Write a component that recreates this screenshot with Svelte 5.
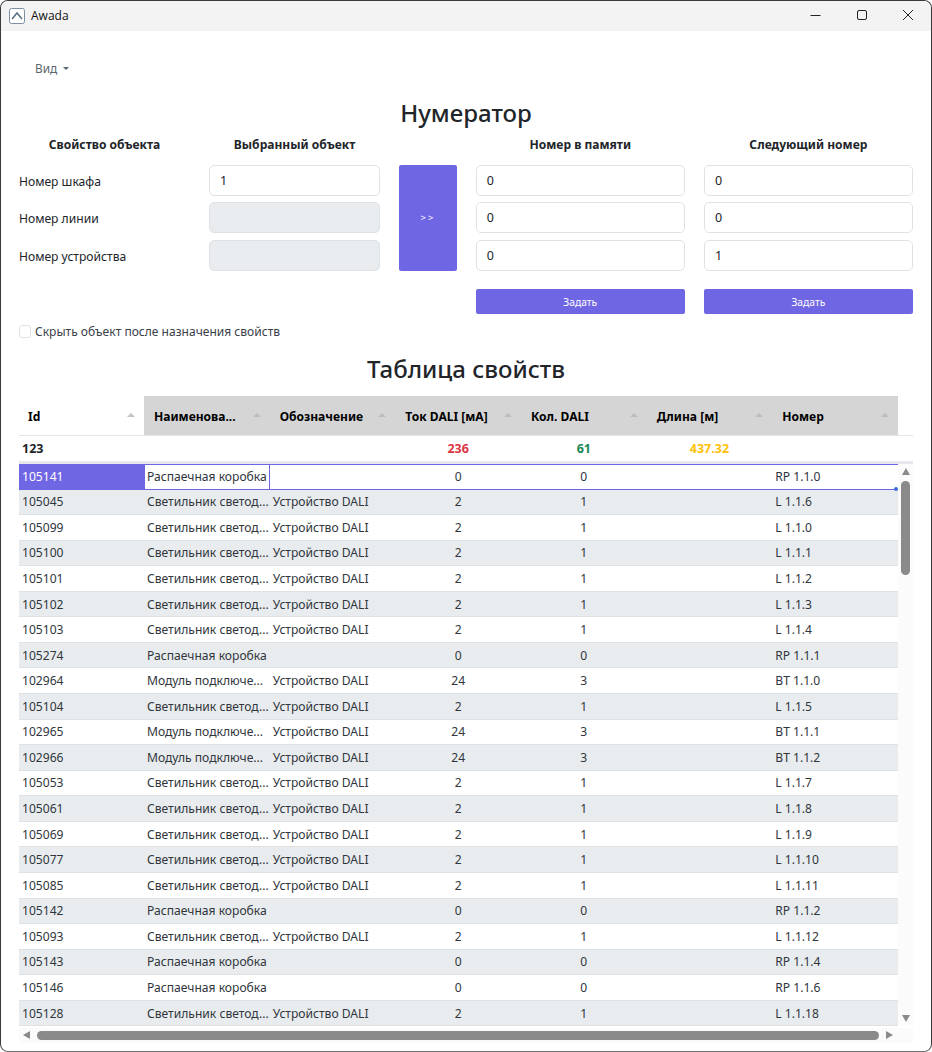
<script>
  const LAMP = 'Светильник светод...';
  const MOD = 'Модуль подключе...';
  const BOX = 'Распаечная коробка';
  const DALI = 'Устройство DALI';
  const rows = [
    ['105141', BOX, '', 0, 0, 'RP 1.1.0'],
    ['105045', LAMP, DALI, 2, 1, 'L 1.1.6'],
    ['105099', LAMP, DALI, 2, 1, 'L 1.1.0'],
    ['105100', LAMP, DALI, 2, 1, 'L 1.1.1'],
    ['105101', LAMP, DALI, 2, 1, 'L 1.1.2'],
    ['105102', LAMP, DALI, 2, 1, 'L 1.1.3'],
    ['105103', LAMP, DALI, 2, 1, 'L 1.1.4'],
    ['105274', BOX, '', 0, 0, 'RP 1.1.1'],
    ['102964', MOD, DALI, 24, 3, 'BT 1.1.0'],
    ['105104', LAMP, DALI, 2, 1, 'L 1.1.5'],
    ['102965', MOD, DALI, 24, 3, 'BT 1.1.1'],
    ['102966', MOD, DALI, 24, 3, 'BT 1.1.2'],
    ['105053', LAMP, DALI, 2, 1, 'L 1.1.7'],
    ['105061', LAMP, DALI, 2, 1, 'L 1.1.8'],
    ['105069', LAMP, DALI, 2, 1, 'L 1.1.9'],
    ['105077', LAMP, DALI, 2, 1, 'L 1.1.10'],
    ['105085', LAMP, DALI, 2, 1, 'L 1.1.11'],
    ['105142', BOX, '', 0, 0, 'RP 1.1.2'],
    ['105093', LAMP, DALI, 2, 1, 'L 1.1.12'],
    ['105143', BOX, '', 0, 0, 'RP 1.1.4'],
    ['105146', BOX, '', 0, 0, 'RP 1.1.6'],
    ['105128', LAMP, DALI, 2, 1, 'L 1.1.18']
  ];
  const heads = ['Id', 'Наименова...', 'Обозначение', 'Ток DALI [мА]', 'Кол. DALI', 'Длина [м]', 'Номер'];
</script>

<div class="window">
  <header class="titlebar">
    <svg class="logo" width="16" height="16" viewBox="0 0 16 16">
      <rect x="0.5" y="0.5" width="15" height="15" rx="2" fill="#fff" stroke="#7d8ea3" />
      <path d="M3 11 L8 5 L13 11" fill="none" stroke="#5e7187" stroke-width="1.6" />
    </svg>
    <span class="app-name">Awada</span>
    <div class="controls">
      <svg width="46" height="30" viewBox="0 0 46 30"><path d="M17.5 14.5h10" stroke="#222" stroke-width="1" /></svg>
      <svg width="46" height="30" viewBox="0 0 46 30"><rect x="18.5" y="9.5" width="9" height="9" rx="1.5" fill="none" stroke="#222" /></svg>
      <svg width="46" height="30" viewBox="0 0 46 30"><path d="M18 9l10 10M28 9L18 19" stroke="#222" stroke-width="1" /></svg>
    </div>
  </header>

  <main class="content">
    <div class="menu">Вид <span class="caret"></span></div>
    <h1>Нумератор</h1>

    <section class="numerator">
      <div class="col-head">Свойство объекта</div>
      <div class="col-head">Выбранный объект</div>
      <div></div>
      <div class="col-head">Номер в памяти</div>
      <div class="col-head">Следующий номер</div>

      <div class="label">Номер шкафа</div>
      <div class="field">1</div>
      <div class="transfer">&gt;&gt;</div>
      <div class="field">0</div>
      <div class="field">0</div>

      <div class="label">Номер линии</div>
      <div class="field disabled"></div>
      <div class="field">0</div>
      <div class="field">0</div>

      <div class="label">Номер устройства</div>
      <div class="field disabled"></div>
      <div class="field">0</div>
      <div class="field">1</div>

      <div class="set first">Задать</div>
      <div class="set">Задать</div>
    </section>

    <label class="check"><span class="box"></span>Скрыть объект после назначения свойств</label>

    <h1 class="second">Таблица свойств</h1>

    <section class="table">
      <div class="thead">
        {#each heads as h, i}
          <div class="th" class:plain={i === 0}>
            <span class="th-text">{h}</span>
            <span class="sort"></span>
          </div>
        {/each}
      </div>
      <div class="summary">
        <div class="s-id">123</div>
        <div></div>
        <div></div>
        <div class="num red">236</div>
        <div class="num green">61</div>
        <div class="num amber">437.32</div>
        <div></div>
      </div>
      <div class="body">
        <div class="rows">
          {#each rows as r, i}
            <div class="row" class:alt={i % 2 === 1} class:selected={i === 0}>
              <div class="td id">{r[0]}</div>
              <div class="td name">{r[1]}</div>
              <div class="td">{r[2]}</div>
              <div class="td num">{r[3]}</div>
              <div class="td num">{r[4]}</div>
              <div class="td"></div>
              <div class="td">{r[5]}</div>
            </div>
          {/each}
        </div>
        <div class="vscroll">
          <span class="arrow up"></span>
          <span class="vthumb"></span>
          <span class="arrow down"></span>
        </div>
      </div>
      <div class="hscroll">
        <span class="arrow left"></span>
        <span class="hthumb"></span>
        <span class="arrow right"></span>
      </div>
    </section>
  </main>
</div>

<style>
  :global(body) {
    margin: 0;
    background: #fff;
  }
  .window {
    box-sizing: border-box;
    width: 932px;
    height: 1052px;
    border: 1px solid #3a3a3a;
    border-bottom-color: #6e6e6e;
    border-radius: 8px;
    overflow: hidden;
    background: #fff;
    font-family: "Noto Sans", "Open Sans", sans-serif;
    color: #212529;
    font-size: 12.1px;
  }
  .titlebar {
    display: flex;
    align-items: center;
    height: 30px;
    background: #f3f3f3;
    padding-left: 8px;
  }
  .logo {
    margin-right: 6px;
    margin-top: -1px;
  }
  .app-name {
    font-family: "Open Sans", sans-serif;
    font-size: 12px;
    color: #111;
    margin-top: -2px;
  }
  .controls {
    display: flex;
    margin-left: auto;
  }
  .content {
    padding: 0 18px;
  }
  .menu {
    display: flex;
    align-items: center;
    gap: 6px;
    height: 20px;
    margin: 27px 0 0 16px;
    font-size: 11.8px;
    color: #5c6670;
  }
  .caret {
    width: 0;
    height: 0;
    border-left: 3.5px solid transparent;
    border-right: 3.5px solid transparent;
    border-top: 3.5px solid #5c6670;
  }
  h1 {
    margin: 18px 0 0;
    height: 34px;
    font-size: 24px;
    line-height: 34px;
    font-weight: 500;
    text-align: center;
    color: #212529;
  }
  h1.second {
    margin-top: 11px;
  }
  .numerator {
    display: grid;
    grid-template-columns: 171px 171px 57.5px 209px 209px;
    grid-template-rows: 24.6px 30.6px 30.6px 30.6px 25px;
    column-gap: 19.1px;
    row-gap: 6.9px;
    margin-top: 3.5px;
  }
  .col-head {
    font-size: 12.06px;
    font-weight: 700;
    text-align: center;
    line-height: 21px;
    color: #212529;
  }
  .label {
    display: flex;
    align-items: center;
    padding-top: 2px;
  }
  .field {
    box-sizing: border-box;
    display: flex;
    align-items: center;
    padding-left: 10px;
    border: 1px solid #dee2e6;
    border-radius: 5px;
    background: #fff;
    font-size: 12.5px;
  }
  .field.disabled {
    background: #e9ecef;
  }
  .transfer {
    grid-row: 2 / span 3;
    grid-column: 3;
    display: flex;
    align-items: center;
    justify-content: center;
    background: #6f66e4;
    border-radius: 2px;
    color: #fff;
    font-size: 9.5px;
    letter-spacing: 2px;
  }
  .set {
    grid-column: 5;
    grid-row: 5;
    margin-top: 12px;
    height: 25px;
    display: flex;
    align-items: center;
    justify-content: center;
    background: #6f66e4;
    border-radius: 2px;
    color: #fff;
    font-size: 10.3px;
  }
  .set.first {
    grid-column: 4;
  }
  .check {
    display: flex;
    align-items: center;
    margin-top: 20.5px;
    height: 18px;
    font-size: 12.05px;
    color: #3a4149;
  }
  .box {
    box-sizing: border-box;
    width: 12px;
    height: 13px;
    margin-right: 4px;
    border: 1px solid #dee2e6;
    border-radius: 3px;
  }
  .table {
    width: 894px;
    margin-top: 10px;
  }
  .thead,
  .row {
    display: grid;
    grid-template-columns: 125px repeat(6, 125.67px);
    width: 879px;
  }
  .thead {
    height: 39px;
  }
  .th {
    display: flex;
    align-items: center;
    justify-content: space-between;
    padding: 0 9px 0 10px;
    background: #d5d5d5;
    min-width: 0;
    font-size: 12.06px;
    font-weight: 700;
    color: #000;
  }
  .th.plain {
    background: #fff;
    padding-left: 9px;
  }
  .th-text {
    margin-top: 2px;
    white-space: nowrap;
  }
  .sort {
    flex: none;
    width: 0;
    height: 0;
    border-left: 4px solid transparent;
    border-right: 4px solid transparent;
    border-bottom: 4px solid #c4c4c4;
  }
  .th:not(.plain) .sort {
    border-bottom-color: #bdbdbd;
  }
  .summary {
    box-sizing: border-box;
    display: grid;
    width: 894px;
    grid-template-columns: 125px repeat(6, 125.67px) 15px;
    height: 29px;
    align-items: center;
    border-top: 1px solid #e3e5e8;
    border-bottom: 3px solid #e6e8eb;
    font-weight: 700;
    font-size: 12.5px;
  }
  .s-id {
    padding-left: 3px;
    color: #212529;
  }
  .num {
    text-align: center;
  }
  .red {
    color: #dc3545;
  }
  .green {
    color: #198754;
  }
  .amber {
    color: #ffc107;
  }
  .body {
    display: flex;
    width: 894px;
  }
  .rows {
    width: 879px;
  }
  .row {
    box-sizing: border-box;
    height: 25.57px;
    border-bottom: 1px solid #dfe2e5;
    font-size: 12.1px;
    color: #30363c;
    background: #fff;
  }
  .row.alt {
    background: #e9ecef;
  }
  .td {
    display: flex;
    align-items: center;
    padding: 0 3px;
    min-width: 0;
    white-space: nowrap;
  }
  .td.num {
    justify-content: center;
  }
  .row.selected {
    border-top: 1px solid #6f66e4;
    border-bottom: 1px solid #6f66e4;
    position: relative;
  }
  .row.selected::after {
    content: "";
    position: absolute;
    right: 0;
    bottom: -2px;
    width: 4px;
    height: 4px;
    border-radius: 2px;
    background: #3a6fd8;
  }
  .row.selected .id {
    background: #6f66e4;
    color: #fff;
  }
  .row.selected .name {
    border-left: 1px solid #6f66e4;
    border-right: 1px solid #6f66e4;
    padding-left: 2px;
    padding-right: 0;
  }
  .vscroll {
    flex: 1;
    display: flex;
    flex-direction: column;
    align-items: center;
    background: #fbfbfb;
    padding-top: 4px;
    height: 561px;
    box-sizing: border-box;
  }
  .arrow {
    display: block;
    width: 0;
    height: 0;
    flex: none;
  }
  .up {
    border-left: 4.5px solid transparent;
    border-right: 4.5px solid transparent;
    border-bottom: 7px solid #8a8a8a;
  }
  .down {
    border-left: 4.5px solid transparent;
    border-right: 4.5px solid transparent;
    border-top: 7px solid #8a8a8a;
    margin-top: auto;
    margin-bottom: 3px;
  }
  .vthumb {
    width: 9px;
    height: 94px;
    margin-top: 6px;
    border-radius: 5px;
    background: #8a8a8a;
  }
  .hscroll {
    display: flex;
    align-items: center;
    width: 894px;
    height: 15px;
    background: #fbfbfb;
    padding-left: 4px;
    box-sizing: border-box;
    margin-top: 1.5px;
  }
  .left {
    border-top: 4.5px solid transparent;
    border-bottom: 4.5px solid transparent;
    border-right: 7px solid #8a8a8a;
  }
  .right {
    border-top: 4.5px solid transparent;
    border-bottom: 4.5px solid transparent;
    border-left: 7px solid #8a8a8a;
    margin-left: 7px;
  }
  .hthumb {
    width: 842px;
    height: 9px;
    margin-left: 7px;
    border-radius: 5px;
    background: #8a8a8a;
  }
</style>
